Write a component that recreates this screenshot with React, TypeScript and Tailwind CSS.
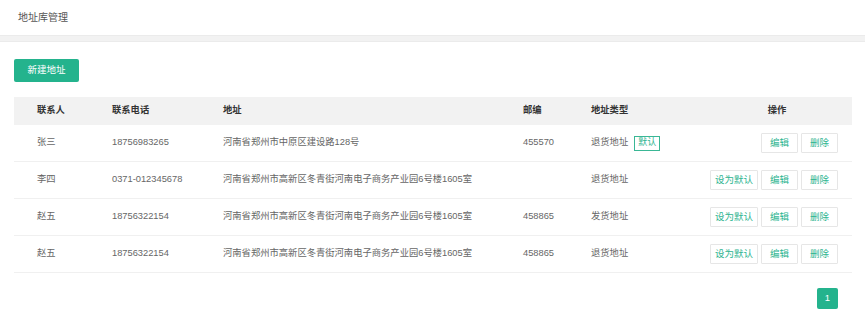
import React from 'react';

type Row = {
  name: string;
  phone: string;
  address: string;
  zip: string;
  type: string;
  isDefault: boolean;
};

const rows: Row[] = [
  { name: '张三', phone: '18756983265', address: '河南省郑州市中原区建设路128号', zip: '455570', type: '退货地址', isDefault: true },
  { name: '李四', phone: '0371-012345678', address: '河南省郑州市高新区冬青街河南电子商务产业园6号楼1605室', zip: '', type: '退货地址', isDefault: false },
  { name: '赵五', phone: '18756322154', address: '河南省郑州市高新区冬青街河南电子商务产业园6号楼1605室', zip: '458865', type: '发货地址', isDefault: false },
  { name: '赵五', phone: '18756322154', address: '河南省郑州市高新区冬青街河南电子商务产业园6号楼1605室', zip: '458865', type: '退货地址', isDefault: false },
];

const cols = 'grid grid-cols-[75px_111px_300px_68px_134px_150px]';

const OpButton: React.FC<{ label: string; wide?: boolean }> = ({ label, wide }) => (
  <button
    className={`h-[20px] ${wide ? 'w-[48px]' : 'w-[37px]'} border border-[#e6e6e6] bg-white text-[#2db48f] text-[9.5px] leading-none rounded-[1px]`}
  >
    {label}
  </button>
);

export default function App() {
  return (
    <div className="w-[865px] h-[331px] bg-white text-[9.3px] text-[#666] font-['Liberation_Sans','Noto_Sans_CJK_SC',sans-serif]">
      <div className="h-[35px] flex items-center pl-[18px] text-[10px] text-[#555]">地址库管理</div>
      <div className="h-[7px] bg-[#f2f2f2] border-y border-[#ebebeb]" />

      <div className="pl-[14px] pr-[13px] pt-[17px]">
        <button className="w-[65px] h-[23px] rounded-[2px] bg-[#24b38d] text-white text-[9.5px]">新建地址</button>

        <div className="mt-[15px]">
          <div className={`${cols} h-[28px] items-center bg-[#f2f2f2] font-bold text-[#333]`}>
            <div className="pl-[23px]">联系人</div>
            <div className="pl-[23px]">联系电话</div>
            <div className="pl-[23px]">地址</div>
            <div className="pl-[23px]">邮编</div>
            <div className="pl-[23px]">地址类型</div>
            <div className="text-center">操作</div>
          </div>
          {rows.map((r, i) => (
            <div key={i} className={`${cols} h-[37px] items-center border-b border-[#f0f0f0]`}>
              <div className="pl-[23px]">{r.name}</div>
              <div className="pl-[23px]">{r.phone}</div>
              <div className="pl-[23px] whitespace-nowrap">{r.address}</div>
              <div className="pl-[23px]">{r.zip}</div>
              <div className="pl-[23px] flex items-center gap-[6px]">
                <span>{r.type}</span>
                {r.isDefault && (
                  <span className="h-[15px] w-[26px] flex items-center justify-center border border-[#3ab795] text-[#2db48f] text-[9px]">默认</span>
                )}
              </div>
              <div className="flex justify-end gap-[3px] pr-[14px]">
                {!r.isDefault && <OpButton label="设为默认" wide />}
                <OpButton label="编辑" />
                <OpButton label="删除" />
              </div>
            </div>
          ))}
        </div>

        <div className="flex justify-end pr-[14px] mt-[15px]">
          <button className="w-[21px] h-[21px] rounded-[2px] bg-[#24b38d] text-white text-[9.5px]">1</button>
        </div>
      </div>
    </div>
  );
}
